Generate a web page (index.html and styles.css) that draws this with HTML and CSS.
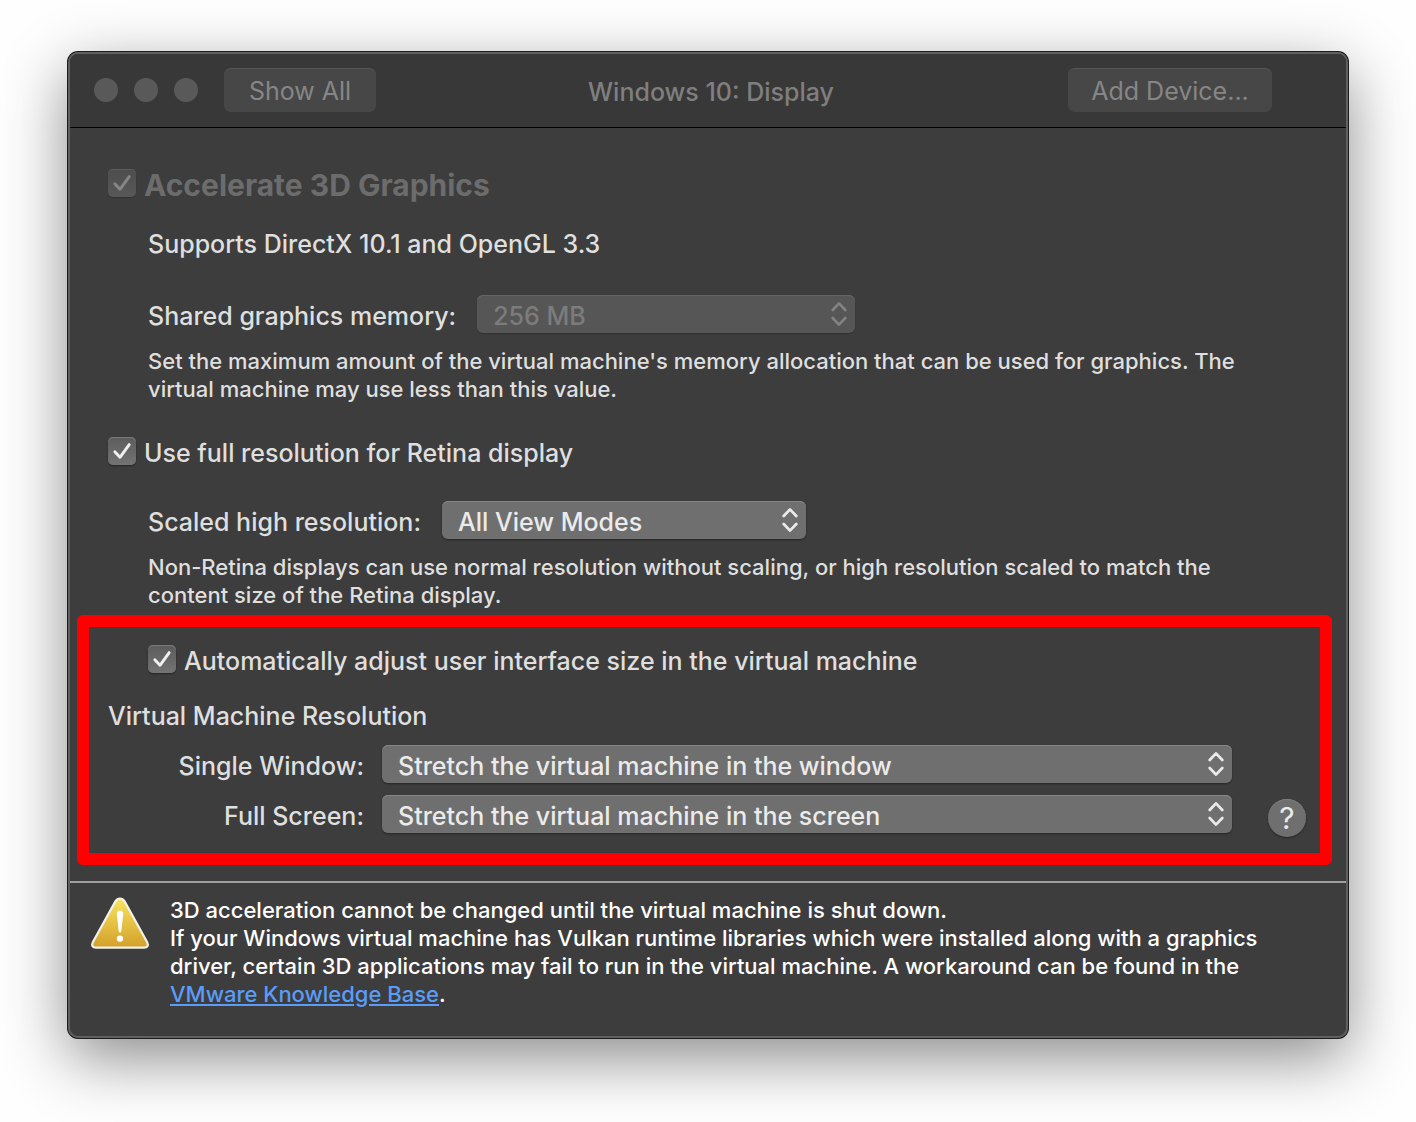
FILE: index.html
```
<!DOCTYPE html>
<html lang="en">
<head>
  <meta charset="UTF-8" />
  <meta name="viewport" content="width=device-width, initial-scale=1.0"/>
  <title>Windows 10: Display</title>
  <link rel="stylesheet" href="styles.css">
</head>
<body>

<svg class="symbols" aria-hidden="true">
  <symbol id="tick" viewBox="0 0 28 28">
    <path d="M6.8 14.8 L12 20.3 L21.2 7.6" fill="none" stroke="currentColor" stroke-width="2.9" stroke-linecap="round" stroke-linejoin="round"/>
  </symbol>
  <symbol id="arrows" viewBox="0 0 16 26">
    <path d="M1.7 9 L8 2.4 L14.3 9 M1.7 17 L8 23.6 L14.3 17" fill="none" stroke="currentColor" stroke-width="2.7" stroke-linecap="round" stroke-linejoin="round"/>
  </symbol>
</svg>

<main class="window">
  <header class="titlebar">
    <div class="titlebar-left">
      <span class="light"></span>
      <span class="light"></span>
      <span class="light"></span>
      <button type="button" class="toolbar-btn show-all">Show All</button>
    </div>
    <h1>Windows 10: Display</h1>
    <div class="titlebar-right">
      <button type="button" class="toolbar-btn add-device">Add Device...</button>
    </div>
  </header>

  <form class="settings">
    <section class="group">
      <div class="check-row disabled">
        <span class="check"><input type="checkbox" id="accelerate" checked disabled><svg><use href="#tick"/></svg></span>
        <label for="accelerate">Accelerate 3D Graphics</label>
      </div>
      <p class="supports">Supports DirectX 10.1 and OpenGL 3.3</p>
      <div class="field">
        <label for="memory">Shared graphics memory:</label>
        <span class="popup popup-memory disabled">
          <select id="memory" disabled><option>256 MB</option></select>
          <svg><use href="#arrows"/></svg>
        </span>
      </div>
      <p class="hint">Set the maximum amount of the virtual machine's memory allocation that can be used for graphics. The virtual machine may use less than this value.</p>
    </section>

    <section class="group">
      <div class="check-row">
        <span class="check"><input type="checkbox" id="retina" checked><svg><use href="#tick"/></svg></span>
        <label for="retina">Use full resolution for Retina display</label>
      </div>
      <div class="field">
        <label for="scaled">Scaled high resolution:</label>
        <span class="popup popup-scaled">
          <select id="scaled"><option>All View Modes</option></select>
          <svg><use href="#arrows"/></svg>
        </span>
      </div>
      <p class="hint">Non-Retina displays can use normal resolution without scaling, or high resolution scaled to match the content size of the Retina display.</p>
    </section>

    <section class="highlight">
      <div class="check-row indented">
        <span class="check"><input type="checkbox" id="adjust" checked><svg><use href="#tick"/></svg></span>
        <label for="adjust">Automatically adjust user interface size in the virtual machine</label>
      </div>
      <h2>Virtual Machine Resolution</h2>
      <div class="resolution">
        <div class="modes">
          <label for="single">Single Window:</label>
          <span class="popup">
            <select id="single"><option>Stretch the virtual machine in the window</option></select>
            <svg><use href="#arrows"/></svg>
          </span>
          <label for="full">Full Screen:</label>
          <span class="popup">
            <select id="full"><option>Stretch the virtual machine in the screen</option></select>
            <svg><use href="#arrows"/></svg>
          </span>
        </div>
        <button type="button" class="help-btn" aria-label="Help">?</button>
      </div>
    </section>
  </form>

  <footer class="notice">
    <svg class="warning" viewBox="0 0 60 56" aria-hidden="true">
      <defs>
        <linearGradient id="gold" x1="0" y1="0" x2="0" y2="1">
          <stop offset="0" stop-color="#f8e45c"/>
          <stop offset="1" stop-color="#d3a02b"/>
        </linearGradient>
      </defs>
      <path d="M30 2.6 Q33 2.6 34.6 5.4 L57.2 46.2 Q59.4 51.6 54 51.6 L6 51.6 Q.6 51.6 2.8 46.2 L25.4 5.4 Q27 2.6 30 2.6 Z" fill="url(#gold)" stroke="#f3f1ea" stroke-width="2.2" stroke-linejoin="round"/>
      <path d="M30 14.5 Q33.4 14.5 33.2 18 L31.3 35 Q31.1 36.6 30 36.6 Q28.9 36.6 28.7 35 L26.8 18 Q26.6 14.5 30 14.5 Z" fill="#fff"/>
      <circle cx="30" cy="42.6" r="3.2" fill="#fff"/>
    </svg>
    <p>
      3D acceleration cannot be changed until the virtual machine is shut down.<br>
      If your Windows virtual machine has Vulkan runtime libraries which were installed along with a graphics driver, certain 3D applications may fail to run in the virtual machine. A workaround can be found in the <a href="#">VMware Knowledge Base</a>.
    </p>
  </footer>
</main>

</body>
</html>
```
FILE: styles.css
```
* { box-sizing: border-box; }

body {
  margin: 0;
  padding: 52px 68px 84px;
  font-family: Inter, "Liberation Sans", sans-serif;
  font-size: 25px;
  font-weight: 500;
  line-height: 32px;
  background: #fefefe;
  color: #dfdfdf;
}

h1, h2, p {
  margin: 0;
  font-size: inherit;
  font-weight: inherit;
}

button, select {
  font: inherit;
}

.symbols {
  display: none;
}

.window {
  background: #3d3d3d;
  border: 2px solid #606060;
  border-radius: 10px;
  box-shadow: 0 0 0 1px #1c1c1c, 0 20px 64px rgba(0, 0, 0, 0.46);
  overflow: hidden;
}

/* title bar */
.titlebar {
  display: grid;
  grid-template-columns: 1fr auto 1fr;
  align-items: center;
  height: 74px;
  padding: 0 74px 2px 24px;
  background: #383838;
  border-bottom: 1px solid #000;
  color: #7f7f7f;
}

.titlebar h1 {
  padding-left: 56px;
  padding-top: 4px;
}

.titlebar-left {
  display: flex;
  align-items: center;
  gap: 16px;
}

.titlebar-right {
  display: flex;
  justify-content: flex-end;
}

.light {
  width: 24px;
  height: 24px;
  border-radius: 50%;
  background: #595959;
}

.toolbar-btn {
  height: 44px;
  padding: 2px 0 0;
  background: #474747;
  border: none;
  border-top: 1px solid #555;
  border-radius: 7px;
  color: #868686;
  font-weight: 400;
}

.show-all {
  width: 152px;
  margin-left: 10px;
}

.add-device {
  width: 204px;
}

/* settings */
.settings {
  padding: 39px 0 16px;
}

.group {
  padding: 0 90px 0 78px;
}

.group + .group {
  margin-top: 32px;
}

.check-row {
  display: flex;
  align-items: center;
  gap: 8px;
  margin-left: -40px;
}

.check-row label {
  padding-top: 2px;
  margin-bottom: -2px;
}

.check-row.disabled {
  color: #6c6c6c;
  font-size: 30px;
  font-weight: 700;
}

.check {
  position: relative;
  flex: none;
  width: 28px;
  height: 28px;
}

.check input {
  display: block;
  appearance: none;
  width: 28px;
  height: 28px;
  margin: 0;
  border-radius: 5px;
  background: linear-gradient(#5c5c5c, #737373);
  box-shadow: 0 1px 2px rgba(0, 0, 0, 0.4), inset 0 1px #7a7a7a;
}

.check svg {
  position: absolute;
  inset: 0;
  width: 28px;
  height: 28px;
  color: #f0f0f0;
  pointer-events: none;
}

.disabled .check input {
  background: linear-gradient(#4d4d4d, #585858);
  box-shadow: 0 1px 1px rgba(0, 0, 0, 0.2), inset 0 1px #5e5e5e;
}

.disabled .check svg {
  color: #868686;
}

.supports {
  margin-top: 29px;
}

.field {
  display: flex;
  align-items: center;
  gap: 21px;
  margin-top: 34px;
}

.supports + .field {
  margin-top: 35px;
}

.field label,
.modes label {
  padding-top: 2px;
  margin-bottom: -2px;
}

.hint {
  margin-top: 14px;
  font-size: 22px;
  line-height: 28px;
}

.popup {
  position: relative;
  display: block;
}

.popup-memory {
  width: 378px;
}

.popup-scaled {
  width: 364px;
}

.popup select {
  display: block;
  appearance: none;
  width: 100%;
  height: 38px;
  padding: 3px 40px 0 16px;
  border: none;
  border-radius: 6px;
  background: #6f6f6f;
  box-shadow: 0 1px 2px rgba(0, 0, 0, 0.4), inset 0 1px #878787;
  color: #ebebeb;
}

.popup svg {
  position: absolute;
  top: 6px;
  right: 8px;
  width: 16px;
  height: 26px;
  color: #ebebeb;
  pointer-events: none;
}

.popup.disabled select {
  background: #565656;
  box-shadow: 0 1px 1px rgba(0, 0, 0, 0.2), inset 0 1px #666;
  color: #7c7c7c;
  opacity: 1;
}

.popup.disabled svg {
  color: #828282;
}

/* red frame */
.highlight {
  margin: 6px 14px 0 7px;
  padding: 16px 14px 20px 19px;
  border: 12px solid #f00;
  border-radius: 6px;
}

.check-row.indented {
  margin-left: 40px;
}

.highlight h2 {
  margin-top: 25px;
}

.resolution {
  display: flex;
  align-items: flex-end;
  gap: 36px;
  margin-top: 13px;
}

.modes {
  flex: 1;
  display: grid;
  grid-template-columns: 256px 1fr;
  align-items: center;
  gap: 12px 18px;
}

.modes label {
  text-align: right;
}

.help-btn {
  width: 38px;
  height: 38px;
  margin-bottom: -4px;
  padding: 0;
  border: none;
  border-radius: 50%;
  background: #6f6f6f;
  box-shadow: 0 1px 2px rgba(0, 0, 0, 0.4), inset 0 1px #7e7e7e;
  color: #ebebeb;
  font-size: 30px;
  font-weight: 400;
}

/* notice */
.notice {
  display: flex;
  gap: 20px;
  padding: 13px 84px 28px 20px;
  border-top: 2px solid #a0a0a0;
  color: #fff;
  font-size: 22px;
  line-height: 28px;
}

.warning {
  flex: none;
  width: 60px;
  height: 56px;
}

.notice a {
  color: #5a9cf8;
}
```
